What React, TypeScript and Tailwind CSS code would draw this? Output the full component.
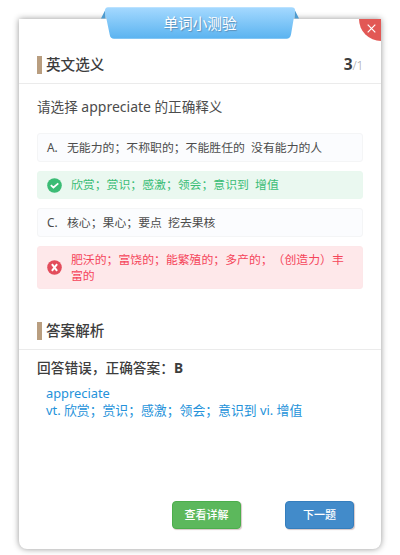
import { ReactNode } from 'react';
import clsx from 'clsx';

type Status = 'idle' | 'correct' | 'wrong';

interface Option {
  label: string;
  text: string;
  status: Status;
}

const OPTIONS: Option[] = [
  { label: 'A.', text: '无能力的；不称职的；不能胜任的  没有能力的人', status: 'idle' },
  { label: 'B.', text: '欣赏；赏识；感激；领会；意识到  增值', status: 'correct' },
  { label: 'C.', text: '核心；果心；要点  挖去果核', status: 'idle' },
  { label: 'D.', text: '肥沃的；富饶的；能繁殖的；多产的；（创造力）丰富的', status: 'wrong' },
];

const StatusIcon = ({ status }: { status: Status }) => (
  <svg className="h-[15px] w-[15px] shrink-0" viewBox="0 0 15 15" fill="none">
    <circle cx="7.5" cy="7.5" r="7.3" fill={status === 'correct' ? '#3bbc75' : '#e34d5c'} />
    {status === 'correct' ? (
      <path d="M3.8 7.2l2.6 2.3 4.9-4.2" stroke="#fff" strokeWidth="1.7" />
    ) : (
      <path d="M4.9 4.2l5.2 6.6M10.1 4.2l-5.2 6.6" stroke="#fff" strokeWidth="2" />
    )}
  </svg>
);

const SectionTitle = ({ title, children }: { title: string; children?: ReactNode }) => (
  <div className="flex h-[38px] items-center border-b border-[#ebebeb] px-[18px]">
    <span className="h-[18px] w-[5px] bg-[#b99e80]" />
    <h2 className="-mt-[2px] ml-1 text-[14.6px] font-medium leading-5 text-[#3d3d3d]">{title}</h2>
    {children}
  </div>
);

const OptionRow = ({ label, text, status }: Option) => (
  <div
    className={clsx(
      'flex items-center rounded-[3px] border pl-[9px] text-[11.87px] leading-[15.5px]',
      status === 'idle' && 'h-[29px] border-[#f4f5f6] bg-[#fbfcfe] text-[#4c4c4c]',
      status === 'correct' && 'h-[28px] border-[#e9f8ef] bg-[#eaf8f0] text-[#3bbd76]',
      status === 'wrong' && 'h-[43px] border-[#fde7e9] bg-[#fee8ea] text-[#f5455a]'
    )}
  >
    {status === 'idle' ? (
      <span className="w-5 shrink-0">{label}</span>
    ) : (
      <span className="w-6 shrink-0">
        <StatusIcon status={status} />
      </span>
    )}
    <span className="w-[279px] whitespace-pre-wrap">{text}</span>
  </div>
);

const Ribbon = () => (
  <div className="absolute left-[82px] top-[-12px] flex h-8 w-[198px] items-center justify-center">
    <svg className="absolute inset-0" width="198" height="32" viewBox="0 0 198 32">
      <defs>
        <linearGradient id="ribbon" x1="0" y1="0" x2="0" y2="1">
          <stop offset="0" stopColor="#a5d9ff" />
          <stop offset="1" stopColor="#5ab3f0" />
        </linearGradient>
      </defs>
      <path d="M0 11.5L4.5 2.5V11.5zM198 11.5L193.5 2.5V11.5z" fill="#4d9bd0" />
      <path
        d="M7 .2H190.500Q194.500 .2 194 4L190 27.500Q189 31.800 185.500 31.800H13Q9.500 31.800 8.800 28L4 5Q3.500 .2 7 .2z"
        fill="url(#ribbon)"
      />
    </svg>
    <span className="relative text-[14.6px] leading-none text-white [text-shadow:1px_1px_1px_#5c8fb8]">
      单词小测验
    </span>
  </div>
);

function App() {
  return (
    <div className="h-[555px] w-[400px] overflow-hidden bg-white pl-[19px] pt-[19px] font-['Noto_Sans','Noto_Sans_CJK_SC',sans-serif] [text-spacing-trim:space-all]">
      <div className="relative flex h-[530px] w-[362px] flex-col rounded-b-[8px] bg-white shadow-[0_0_6px_0_rgba(0,0,0,0.42)]">
        <Ribbon />
        <button
          className="absolute right-0 top-0 flex h-[22px] w-[22px] items-center justify-center rounded-bl-full bg-[#e25855]"
          aria-label="关闭"
        >
          <svg className="mb-[3px] ml-[3px]" width="9" height="9" viewBox="0 0 9 9">
            <path d="M.7.7l7.600 7.600M8.300.7L.7 8.300" stroke="#fff" strokeWidth="1.2" />
          </svg>
        </button>

        <div className="pt-[27px]">
          <SectionTitle title="英文选义">
            <span className="-mt-[2px] ml-auto text-[15.5px] font-bold leading-5 text-[#3d3d3d]">3</span>
            <span className="pt-[3px] text-[12px] font-light leading-4 tracking-[-0.3px] text-[#a8a8a8]">/1</span>
          </SectionTitle>
        </div>

        <p className="ml-[18px] mt-[13px] text-[13.6px] leading-5 text-[#4c4c4c]">
          请选择 <span className="text-[14px]">appreciate</span> 的正确释义
        </p>
        <div className="mx-[18px] mt-4 flex flex-col gap-[9px]">
          {OPTIONS.map((option) => (
            <OptionRow key={option.label} {...option} />
          ))}
        </div>

        <div className="mt-[23px]">
          <SectionTitle title="答案解析" />
        </div>
        <p className="ml-[18px] mt-[8px] text-[13.7px] font-medium leading-5 text-[#3d3d3d]">
          回答错误，正确答案：<b>B</b>
        </p>
        <div className="ml-[27px] mt-[7px] text-[12.85px] leading-[16.5px] text-[#2492da]">
          <p>appreciate</p>
          <p>vt. 欣赏；赏识；感激；领会；意识到 vi. 增值</p>
        </div>

        <div className="mb-[20px] mr-[27px] mt-auto flex justify-end gap-[44px] text-[11px] font-medium text-white">
          <button className="h-7 w-[69px] rounded-[4px] border border-[#4cae4c] bg-[#5cb85c] shadow-[1px_1px_1px_#d8c8c8]">
            查看详解
          </button>
          <button className="h-7 w-[69px] rounded-[4px] border border-[#357ebd] bg-[#428bca] shadow-[1px_1px_1px_#d8c8c8]">
            下一题
          </button>
        </div>
      </div>
    </div>
  );
}

export default App;
